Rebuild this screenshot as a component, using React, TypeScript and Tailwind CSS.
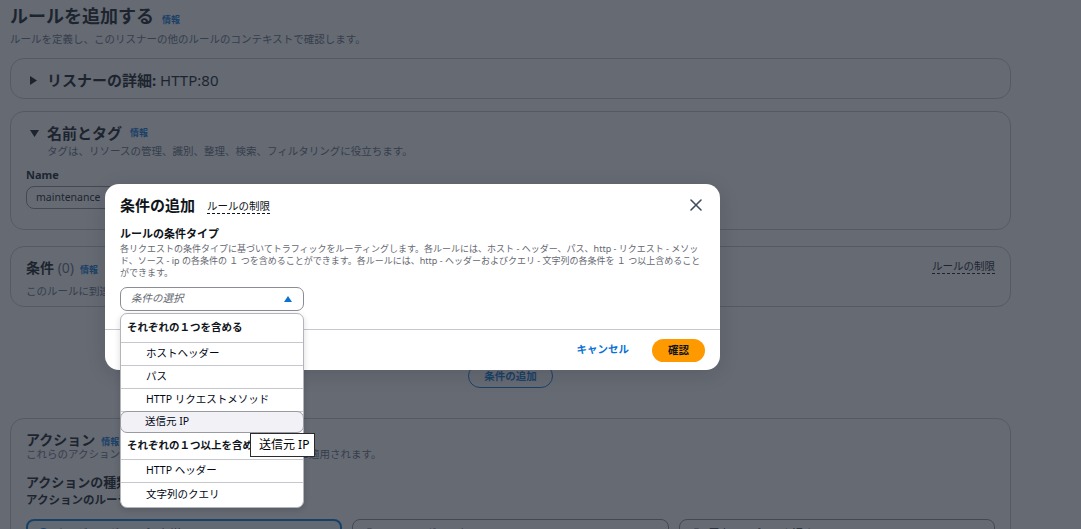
import React from 'react'

// Rule editor page (ALB listener) with the "add condition" modal open and
// the condition-type select expanded, hovering "送信元 IP".

function Caret({ open }: { open?: boolean }) {
  return open ? (
    <svg width="9" height="7" viewBox="0 0 9 7" className="shrink-0">
      <path d="M0 0 H9 L4.5 7 Z" fill="#0f141a" />
    </svg>
  ) : (
    <svg width="7" height="9" viewBox="0 0 7 9" className="shrink-0">
      <path d="M0 0 V9 L7 4.5 Z" fill="#0f141a" />
    </svg>
  )
}

function Info() {
  return <span className="text-[9px] font-bold leading-[12px] text-[#0972d3]">情報</span>
}

const options1 = ['ホストヘッダー', 'パス', 'HTTP リクエストメソッド']
const options2 = ['HTTP ヘッダー', '文字列のクエリ']

export default function App() {
  return (
    <div className="relative w-[1081px] h-[529px] overflow-hidden bg-white text-[#0f141a] font-['Noto_Sans','Noto_Sans_CJK_JP',sans-serif]">
      <main className="ml-[10px] w-[1001px] pt-[4px]">
        <div className="flex items-baseline gap-[8px]">
          <h1 className="text-[18px] font-bold leading-[24px]">ルールを追加する</h1>
          <Info />
        </div>
        <p className="mt-[3px] text-[10.5px] leading-[16px] text-[#5f6b7a]">
          ルールを定義し、このリスナーの他のルールのコンテキストで確認します。
        </p>

        {/* listener details (collapsed) */}
        <section className="mt-[11px] h-[41px] rounded-[14px] border border-[#c6c6cd] flex items-center gap-[10px] pl-[19px] pt-[3px]">
          <Caret />
          <h2 className="text-[15px] leading-[20px]">
            <span className="font-bold">リスナーの詳細:</span> HTTP:80
          </h2>
        </section>

        {/* name & tags */}
        <section className="mt-[12px] h-[119px] rounded-[14px] border border-[#c6c6cd] pl-[15px] pt-[11px]">
          <div className="flex items-center gap-[8px] pl-[4px]">
            <Caret open />
            <h2 className="text-[15px] font-bold leading-[20px]">名前とタグ</h2>
            <Info />
          </div>
          <p className="pl-[21px] text-[10.5px] leading-[16px] text-[#5f6b7a]">
            タグは、リソースの管理、識別、整理、検索、フィルタリングに役立ちます。
          </p>
          <div className="mt-[8px] text-[11px] font-bold leading-[16px]">Name</div>
          <div className="mt-[3px] h-[23px] w-[460px] rounded-[8px] border border-[#8c8c94] pl-[9px] text-[10.5px] leading-[21px]">
            maintenance
          </div>
        </section>

        {/* conditions */}
        <section className="mt-[16px] h-[61px] rounded-[14px] border border-[#c6c6cd] pl-[15px] pr-[15px] pt-[11px] flex justify-between">
          <div>
            <div className="flex items-baseline gap-[6px]">
              <h2 className="text-[14px] font-bold leading-[20px]">
                条件 <span className="font-normal text-[#5f6b7a]">(0)</span>
              </h2>
              <Info />
            </div>
            <p className="mt-[5px] text-[10.5px] leading-[16px] text-[#5f6b7a]">
              このルールに到達するリクエストに適用する条件を最大 5 つまで追加します。
            </p>
          </div>
          <span className="self-start mt-[2px] text-[10.5px] leading-[13px] border-b border-dashed border-[#0f141a]">
            ルールの制限
          </span>
        </section>

        <div className="mt-[57px] flex justify-center">
          <button className="h-[24px] rounded-full border border-[#0972d3] px-[15px] text-[10.5px] font-bold leading-[22px] text-[#0972d3]">
            条件の追加
          </button>
        </div>

        {/* actions */}
        <section className="mt-[30px] h-[140px] rounded-[14px] border border-[#c6c6cd] px-[15px] pt-[13px]">
          <div className="flex items-baseline gap-[6px]">
            <h2 className="text-[14px] font-bold leading-[16px]">アクション</h2>
            <Info />
          </div>
          <p className="text-[10.5px] leading-[13px] text-[#5f6b7a]">
            これらのアクションは、このルールに一致するリクエストに適用されます。
          </p>
          <h3 className="mt-[12px] text-[13px] font-bold leading-[18px]">アクションの種類</h3>
          <div className="mt-[1px] text-[11.5px] font-bold leading-[16px]">アクションのルーティング</div>
          <div className="mt-[11px] grid grid-cols-3 gap-[10px]">
            <div className="h-[60px] rounded-[8px] border-2 border-[#0972d3] bg-[#f0fbff] flex items-start gap-[7px] pl-[10px] pt-[5px]">
              <span className="mt-[2px] w-[11px] h-[11px] rounded-full border-[3.5px] border-[#0972d3] bg-white" />
              <span className="text-[10.5px] leading-[15px]">ターゲットグループへ転送</span>
            </div>
            <div className="h-[60px] rounded-[8px] border border-[#8c8c94] flex items-start gap-[7px] pl-[11px] pt-[6px]">
              <span className="mt-[2px] w-[11px] h-[11px] rounded-full border border-[#8c8c94] bg-white" />
              <span className="text-[10.5px] leading-[15px]">URL にリダイレクト</span>
            </div>
            <div className="h-[60px] rounded-[8px] border border-[#8c8c94] flex items-start gap-[7px] pl-[11px] pt-[6px]">
              <span className="mt-[2px] w-[11px] h-[11px] rounded-full border border-[#8c8c94] bg-white" />
              <span className="text-[10.5px] leading-[15px]">固定レスポンスを返す</span>
            </div>
          </div>
        </section>
      </main>

      {/* modal backdrop */}
      <div className="absolute inset-0 bg-[rgba(35,43,55,0.7)]" />

      {/* modal */}
      <div className="absolute left-[105px] top-[184px] w-[615px] rounded-[14px] bg-white shadow-[0_4px_20px_rgba(0,7,22,0.12)]">
        <div className="flex items-start justify-between pl-[15px] pr-[18px] pt-[11px]">
          <div className="flex items-center gap-[12px]">
            <h2 className="text-[15px] font-bold leading-[20px]">条件の追加</h2>
            <span className="mt-[3px] text-[10.5px] leading-[13px] border-b border-dashed border-[#0f141a]">
              ルールの制限
            </span>
          </div>
          <svg width="12" height="12" viewBox="0 0 12 12" className="mt-[4px]">
            <path d="M1 1 L11 11 M11 1 L1 11" stroke="#414d5c" strokeWidth="1.6" strokeLinecap="round" />
          </svg>
        </div>

        <div className="px-[15px] pb-[18px]">
          <div className="mt-[11px] text-[11px] font-bold leading-[15px]">ルールの条件タイプ</div>
          <div className="mt-[2px] text-[9px] leading-[12px] text-[#656871] whitespace-nowrap">
            <div>各リクエストの条件タイプに基づいてトラフィックをルーティングします。各ルールには、ホスト - ヘッダー、パス、http - リクエスト - メソッ</div>
            <div>ド、ソース - ip の各条件の １ つを含めることができます。各ルールには、http - ヘッダーおよびクエリ - 文字列の各条件を １ つ以上含めること</div>
            <div>ができます。</div>
          </div>

          <div className="relative mt-[8px] w-[184px]">
            <div className="h-[24px] rounded-[7px] border border-[#8c8c94] flex items-center justify-between pl-[10px] pr-[11px]">
              <span className="text-[10.5px] italic text-[#656871]">条件の選択</span>
              <svg width="8" height="6" viewBox="0 0 8 6">
                <path d="M0 6 L4 0 L8 6 Z" fill="#0972d3" />
              </svg>
            </div>

            {/* expanded options */}
            <div className="absolute left-0 top-[26px] z-10 w-[184px] rounded-[7px] border border-[#b4b4bb] bg-white shadow-[0_2px_6px_rgba(0,7,22,0.15)] text-[10.5px]">
              <div className="h-[29px] flex items-center pl-[6px] font-bold border-b border-[#c6c6cd]">
                それぞれの１つを含める
              </div>
              {options1.map((o) => (
                <div key={o} className="h-[23px] flex items-center pl-[25px] border-b border-[#c6c6cd] text-[#000716]">
                  {o}
                </div>
              ))}
              <div className="h-[22px] flex items-center pl-[24px] rounded-[7px] border border-[#9a9aa3] bg-[#f2f2f6] -mx-px -mt-px text-[#000716]">
                送信元 IP
              </div>
              <div className="h-[27px] flex items-center pl-[6px] font-bold border-b border-[#c6c6cd] whitespace-nowrap overflow-hidden">
                それぞれの１つ以上を含める
              </div>
              <div className="h-[23px] flex items-center pl-[25px] border-b border-[#c6c6cd] text-[#000716]">
                {options2[0]}
              </div>
              <div className="h-[24px] flex items-center pl-[25px] text-[#000716]">{options2[1]}</div>
            </div>
          </div>
        </div>

        <div className="h-[41px] border-t border-[#c6c6cd] flex items-center justify-end gap-[23px] pr-[15px]">
          <span className="text-[10.5px] font-bold text-[#0972d3]">キャンセル</span>
          <button className="h-[23px] w-[53px] rounded-full bg-[#ff9900] text-[10.5px] font-bold leading-[23px] text-[#0f141a]">
            確認
          </button>
        </div>
      </div>

      {/* native title tooltip */}
      <div className="absolute left-[250px] top-[433px] z-20 h-[24px] w-[65px] border border-[#2b2b2b] bg-white pl-[8px] text-[12px] leading-[22px] text-black">
        送信元 IP
      </div>
    </div>
  )
}
